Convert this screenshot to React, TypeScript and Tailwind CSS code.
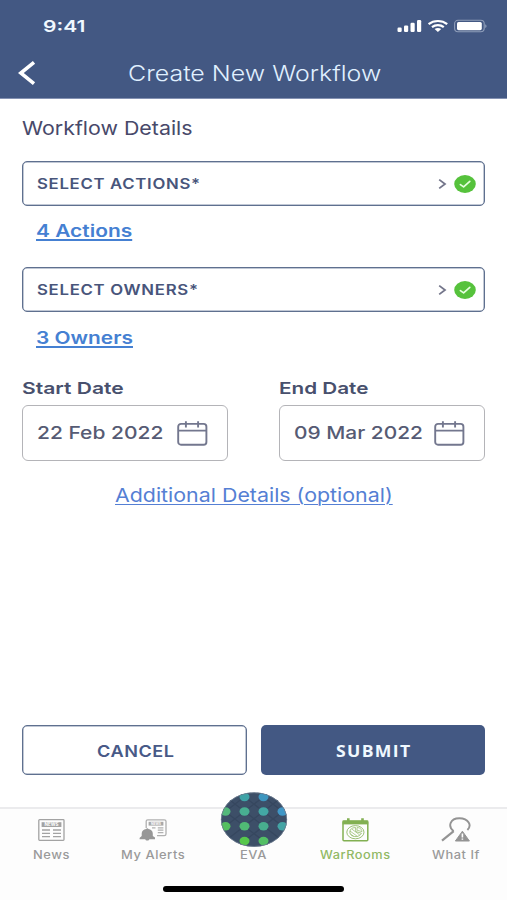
import React, { useLayoutEffect, useRef, useState } from "react";
import clsx from "clsx";

// Text set in an extended width: the glyphs are widened to fill `width`.
const WideText = ({
  width,
  className,
  children,
}: {
  width: number;
  className?: string;
  children: React.ReactNode;
}) => {
  const ref = useRef<HTMLSpanElement>(null);
  const [scale, setScale] = useState(1.2);

  useLayoutEffect(() => {
    if (ref.current) setScale(width / ref.current.offsetWidth);
  }, [width]);

  return (
    <span className="flex shrink-0 justify-start" style={{ width }}>
      <span
        ref={ref}
        className={clsx("block shrink-0 origin-left whitespace-nowrap", className)}
        style={{ transform: `scaleX(${scale})` }}
      >
        {children}
      </span>
    </span>
  );
};

const StatusIcons = () => (
  <svg width="90" height="14" viewBox="0 0 90 14" fill="#fff">
    <rect x="0.5" y="8.6" width="4.2" height="4.4" rx="1.2" />
    <rect x="7" y="6.4" width="4.2" height="6.6" rx="1.2" />
    <rect x="13.5" y="3.8" width="4.2" height="9.2" rx="1.2" />
    <rect x="20" y="1" width="4.2" height="12" rx="1.2" />
    <g fill="none" stroke="#fff" strokeWidth="2.2">
      <path d="M31.6 5.2C36.8 0.9 45 0.9 50.2 5.2" />
      <path d="M35 8.2C38.4 5.4 43.4 5.4 46.8 8.2" />
    </g>
    <path d="M37.6 10C39.6 8.5 42.2 8.5 44.2 10L40.9 13Z" />
    <rect x="57.6" y="1.3" width="29.6" height="11.4" rx="3.4" fill="none" stroke="#8f9db9" strokeWidth="1.1" />
    <rect x="60" y="3" width="24.8" height="8.2" rx="1.6" />
    <path d="M88.2 5.2C90 5.8 90 8.4 88.2 9Z" fill="#8f9db9" />
  </svg>
);

const BackIcon = () => (
  <svg width="18" height="24" viewBox="0 0 18 24" fill="none" stroke="#fff" strokeWidth="3.6">
    <path d="M16 1.4L2.8 12L16 22.6" />
  </svg>
);

const CheckBadge = () => (
  <svg width="22" height="18" viewBox="0 0 22 18">
    <ellipse cx="11" cy="9" rx="10.8" ry="8.9" fill="#56c23c" />
    <path d="M6.4 9.6L9.6 11.9L15.8 6.4" fill="none" stroke="#e6ffdf" strokeWidth="1.7" strokeLinecap="round" strokeLinejoin="round" />
  </svg>
);

const CalendarIcon = () => (
  <svg width="31" height="25" viewBox="0 0 31 25" fill="none" stroke="#73778e" strokeWidth="1.9">
    <rect x="1.2" y="2.9" width="28.2" height="20.8" rx="2.8" />
    <path d="M1.2 9.6H29.4M8.9 0.2V6.6M21.1 0.2V6.6" />
  </svg>
);

const NewsIcon = () => (
  <svg width="27" height="22" viewBox="0 0 27 22" fill="none" stroke="#a3a3a3">
    <rect x="0.8" y="0.7" width="25.2" height="20.6" rx="0.8" strokeWidth="1.3" />
    <rect x="3.6" y="3.2" width="19.8" height="4.8" fill="#a3a3a3" stroke="none" />
    <text x="13.5" y="7.3" fontSize="4.6" fontWeight="700" fontFamily="Inter, sans-serif" textAnchor="middle" textLength="14" lengthAdjust="spacingAndGlyphs" fill="#fff" stroke="none">
      NEWS
    </text>
    <path d="M4 11H12M4 14.3H12M4 17.7H12M15 11H23M15 14.3H23M15 17.7H23" strokeWidth="1.3" />
  </svg>
);

const AlertsIcon = () => (
  <svg width="28" height="22" viewBox="0 0 28 22" fill="none" stroke="#b0b0b0">
    <path d="M7.2 9V2.2C7.2 1.2 7.7 0.8 8.7 0.8H25.3C26.4 0.8 27 1.3 27 2.2V15C27 16 26.4 16.6 25.3 16.6H18" strokeWidth="1.3" />
    <rect x="9.6" y="2.8" width="14.8" height="3.8" fill="#a8a8a8" stroke="none" />
    <text x="17" y="6" fontSize="3.6" fontWeight="700" fontFamily="Inter, sans-serif" textAnchor="middle" textLength="10" lengthAdjust="spacingAndGlyphs" fill="#fff" stroke="none">
      NEWS
    </text>
    <path d="M13 8.8H16.5M18.8 8.8H24.4M18.8 11.2H24.4M18.8 13.6H24.4" strokeWidth="1.2" />
    <path
      d="M1 18.4L2.7 16.9V14.4C2.7 12 4.6 10.3 7.2 9.9C7.3 8.9 9.3 8.9 9.4 9.9C12 10.3 13.8 12 13.8 14.4V16.9L16 18.6V20.2H0.6V19.1ZM6.2 20H10.4C10.2 22.1 6.4 22.1 6.2 20Z"
      fill="#979797"
      stroke="none"
    />
  </svg>
);

const WarRoomsIcon = () => (
  <svg width="27" height="24" viewBox="0 0 27 24" fill="none" stroke="#82b052">
    <rect x="1" y="3.2" width="24.8" height="19.6" rx="1" strokeWidth="1.5" />
    <rect x="0.6" y="2.4" width="25.6" height="4" fill="#82b052" stroke="none" />
    <path d="M6.3 0.2V4.6M20.5 0.2V4.6" strokeWidth="2.6" />
    <ellipse cx="13.4" cy="14.2" rx="8.6" ry="6.6" strokeWidth="0.8" />
    <path d="M13.6 9.6C8.6 9.4 6.6 13.4 8.6 16.4C11 19.6 17.6 19.4 19.4 15.2L13.8 13.6Z" strokeWidth="0.7" />
    <path d="M8 13L15.4 18.4M10 11.2L17.8 17M8.4 16L11.5 18.2" strokeWidth="0.6" />
    <path d="M15.2 9.4C18.4 9.8 20 11.6 20 13.6L15 12.2Z" strokeWidth="0.6" />
  </svg>
);

const WhatIfIcon = () => (
  <svg width="30" height="25" viewBox="0 0 30 25">
    <g fill="none" stroke="#949494">
      <path d="M12.6 14.2C6.3 9 9.3 1.3 18.3 1.2C27.8 1.3 31.1 8.4 26.4 13" strokeWidth="1.9" />
      <path d="M12.7 14.2L1 23.7" strokeWidth="2.2" />
    </g>
    <path d="M21.4 14.2L28.4 24H14.4Z" fill="#949494" stroke="#949494" strokeLinejoin="round" />
    <path d="M21.4 16.6V20.4M21.4 21.4V22.8" stroke="#fff" strokeWidth="1.6" />
  </svg>
);

const evaDots = [
  { x: 24.5, y: 5, color: "#3fa3a7" },
  { x: 43.5, y: 5, color: "#3d96bf" },
  { x: 5.5, y: 19.5, color: "#53b87b" },
  { x: 24.5, y: 19.5, color: "#48ae91" },
  { x: 43.5, y: 19.5, color: "#43a7a4" },
  { x: 62.5, y: 19.5, color: "#4097c7" },
  { x: 5.5, y: 34.2, color: "#55c060" },
  { x: 24.5, y: 34.2, color: "#50b975" },
  { x: 43.5, y: 34.2, color: "#48ad8e" },
  { x: 62.5, y: 34.2, color: "#43a4a4" },
  { x: 24.5, y: 49, color: "#56c74c" },
  { x: 43.5, y: 49, color: "#53bf65" },
];

const EvaLogo = () => (
  <svg width="68" height="56" viewBox="0 0 68 56">
    <defs>
      <clipPath id="eva">
        <ellipse cx="34" cy="27.6" rx="33" ry="27.2" />
      </clipPath>
    </defs>
    <g clipPath="url(#eva)">
      <rect width="68" height="56" fill="#3d4f68" />
      <path
        d="M-13.5 5L62.5 63.6M-13.5 -10L72 56M5.5 -10L81.5 49M24.5 -10L81.5 34.2M-13.5 34.2L43.5 78M81.5 5L5.5 63.6M81.5 -10L-4 56M62.5 -10L-13.5 49M43.5 -10L-13.5 34.2M81.5 34.2L24.5 78"
        stroke="#36475f"
        strokeWidth="1.2"
      />
      {evaDots.map((dot) => (
        <ellipse key={`${dot.x}-${dot.y}`} cx={dot.x} cy={dot.y} rx="5" ry="4.2" fill={dot.color} />
      ))}
    </g>
    <ellipse cx="34" cy="27.6" rx="32.7" ry="26.9" fill="none" stroke="#6f7d90" strokeWidth="0.8" />
  </svg>
);

const SelectField = ({ label, width }: { label: string; width: number }) => (
  <button className="flex h-[45px] w-full items-center rounded-[5px] border-[1.5px] border-[#5f708f] pl-[14px] pr-[8px] shadow-[inset_0_0_0_0.5px_#8492ab]">
    <WideText width={width} className="pt-px text-[14.5px] leading-5 font-semibold tracking-[0.6px] text-[#48557b]">
      {label}
    </WideText>
    <svg className="ml-auto mr-[7px]" width="9" height="12" viewBox="0 0 9 12" fill="none" stroke="#73758a" strokeWidth="1.8">
      <path d="M1.2 1.6L7 6L1.2 10.4" />
    </svg>
    <CheckBadge />
  </button>
);

const DateField = ({
  label,
  labelWidth,
  value,
  valueWidth,
}: {
  label: string;
  labelWidth: number;
  value: string;
  valueWidth: number;
}) => (
  <div className="w-[206px]">
    <WideText width={labelWidth} className="text-[16.5px] leading-6 font-semibold text-[#48506d]">
      {label}
    </WideText>
    <button className="mt-[5px] flex h-[56px] w-full items-center justify-between rounded-[6px] border-[1.5px] border-[#b4b4b8] pl-[14px] pr-[19px]">
      <WideText width={valueWidth} className="text-[17.5px] leading-6 font-medium text-[#565b74]">
        {value}
      </WideText>
      <CalendarIcon />
    </button>
  </div>
);

const tabs = [
  { label: "News", width: 37, icon: <NewsIcon /> },
  { label: "My Alerts", width: 64, icon: <AlertsIcon /> },
  { label: "EVA", width: 27, icon: <EvaLogo />, raised: true },
  { label: "WarRooms", width: 71, icon: <WarRoomsIcon />, active: true },
  { label: "What If", width: 48, icon: <WhatIfIcon /> },
];

const TabBar = () => (
  <nav className="flex h-[93px] flex-col border-t-2 border-[#ebebed] bg-[#fdfdfd]">
    <div className="grid grid-cols-5 pl-px">
      {tabs.map((tab) => (
        <button key={tab.label} className="flex flex-col items-center">
          <span className={clsx("flex h-[38px] justify-center", tab.raised ? "-mb-px h-[39px] items-end" : "items-center pt-[3px]")}>
            {tab.icon}
          </span>
          <WideText
            width={tab.width}
            className={clsx(
              "text-[11.5px] leading-4 font-medium tracking-[0.5px]",
              tab.active ? "text-[#91b964]" : "text-[#9a9a9a]"
            )}
          >
            {tab.label}
          </WideText>
        </button>
      ))}
    </div>
    <div className="mx-auto mt-auto mb-[8px] h-[6px] w-[181px] rounded-full bg-black" />
  </nav>
);

const App = () => {
  return (
    <div className="flex h-[900px] w-[507px] flex-col overflow-hidden bg-white font-[Inter,sans-serif]">
      <header className="h-[99px] border-b border-[#8491b2] bg-[#435883]">
        <div className="flex h-[52px] items-center justify-between pr-[20px] pl-[43px]">
          <WideText width={42} className="text-[16px] leading-5 font-semibold text-[#f0f8ff]">
            9:41
          </WideText>
          <StatusIcons />
        </div>
        <div className="grid h-[42px] grid-cols-[110px_1fr] items-center pl-[18px]">
          <button className="justify-self-start">
            <BackIcon />
          </button>
          <h1>
            <WideText width={253} className="text-[21.5px] leading-7 font-light text-[#e0f0ff]">
              Create New Workflow
            </WideText>
          </h1>
        </div>
      </header>

      <main className="flex flex-1 flex-col px-[22px]">
        <h2 className="mt-[18px]">
          <WideText width={171} className="text-[19px] leading-6 text-[#48496a]">
            Workflow Details
          </WideText>
        </h2>

        <div className="mt-[20px]">
          <SelectField label="SELECT ACTIONS*" width={164} />
          <a className="mt-[13px] ml-[14px] block">
            <WideText width={96} className="text-[17px] leading-6 font-semibold text-[#4580d2] underline decoration-[1.5px] underline-offset-2">
              4 Actions
            </WideText>
          </a>
        </div>

        <div className="mt-[24px]">
          <SelectField label="SELECT OWNERS*" width={162} />
          <a className="mt-[14px] ml-[14px] block">
            <WideText width={97} className="text-[17px] leading-6 font-semibold text-[#4580d2] underline decoration-[1.5px] underline-offset-2">
              3 Owners
            </WideText>
          </a>
        </div>

        <div className="mt-[26px] flex justify-between">
          <DateField label="Start Date" labelWidth={102} value="22 Feb 2022" valueWidth={126} />
          <DateField label="End Date" labelWidth={89} value="09 Mar 2022" valueWidth={129} />
        </div>

        <a className="mt-[21px] flex justify-center">
          <WideText width={278} className="text-[19px] leading-7 text-[#557fd4] underline decoration-1 underline-offset-2">
            Additional Details (optional)
          </WideText>
        </a>

        <div className="mt-auto mb-[32px] grid grid-cols-2 gap-[14px]">
          <button className="flex h-[50px] items-center justify-center rounded-[5px] border-[1.5px] border-[#5f708f] pt-px pl-[3px] shadow-[inset_0_0_0_0.5px_#8492ab]">
            <WideText width={78} className="text-[16px] leading-6 font-semibold tracking-[0.5px] text-[#485987]">
              CANCEL
            </WideText>
          </button>
          <button className="flex h-[50px] items-center justify-center rounded-[5px] bg-[#435883] pt-px pl-[2px]">
            <WideText width={76} className="font-['Open_Sans',sans-serif] text-[16px] leading-6 font-bold tracking-[1.2px] text-[#f0f8ff]">
              SUBMIT
            </WideText>
          </button>
        </div>
      </main>

      <TabBar />
    </div>
  );
};

export default App;
